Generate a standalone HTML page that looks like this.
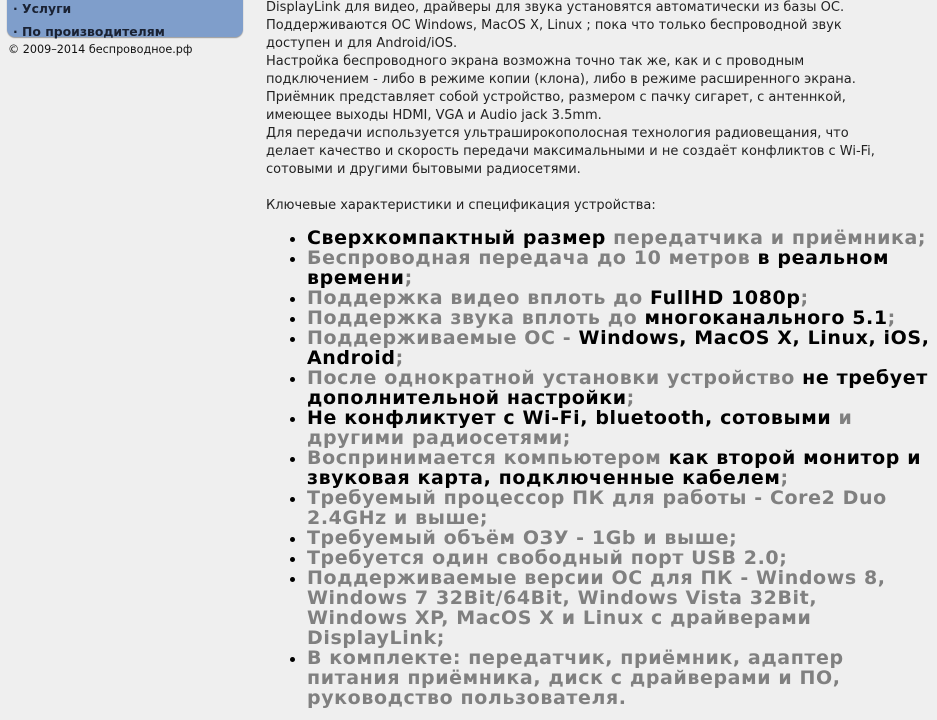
<!DOCTYPE html>
<html><head><meta charset="utf-8"><style>
html,body{margin:0;padding:0;background:#efefef;width:937px;height:720px;overflow:hidden;font-family:"DejaVu Sans","Liberation Sans",sans-serif;}
.side{position:absolute;left:7px;top:-10px;width:236px;height:47px;background:#7f9ecb;border-radius:0 0 8px 8px;box-shadow:0 1px 1px #999;}
.side div{position:absolute;left:6px;font-weight:bold;font-size:12.4px;color:#1a2233;white-space:nowrap}
.copy{position:absolute;left:8px;top:43px;font-size:11.2px;color:#111;white-space:nowrap}
.txt{position:absolute;left:266px;top:-1px;font-size:13px;line-height:18px;color:#222;white-space:nowrap}
ul{position:absolute;left:266px;top:228px;margin:0;padding:0 0 0 41px;font-weight:bold;font-size:19px;letter-spacing:0.6px;line-height:20px;color:#808080;white-space:nowrap;}
li{margin:0;}
li::marker{color:#000;font-size:18px}
b{color:#000}
</style></head><body>
<div class="side"><div style="top:11px">· Услуги</div><div style="top:34px">· По производителям</div></div>
<div class="copy">© 2009–2014 беспроводное.рф</div>
<div class="txt">DisplayLink для видео, драйверы для звука установятся автоматически из базы ОС.<br>Поддерживаются ОС Windows, MacOS X, Linux ; пока что только беспроводной звук<br>доступен и для Android/iOS.<br>Настройка беспроводного экрана возможна точно так же, как и с проводным<br>подключением - либо в режиме копии (клона), либо в режиме расширенного экрана.<br>Приёмник представляет собой устройство, размером с пачку сигарет, с антеннкой,<br>имеющее выходы HDMI, VGA и Audio jack 3.5mm.<br>Для передачи используется ультраширокополосная технология радиовещания, что<br>делает качество и скорость передачи максимальными и не создаёт конфликтов с Wi-Fi,<br>сотовыми и другими бытовыми радиосетями.<br><br>Ключевые характеристики и спецификация устройства:</div>
<ul>
<li><b>Сверхкомпактный размер</b> передатчика и приёмника;</li>
<li>Беспроводная передача до 10 метров <b>в реальном<br>времени</b>;</li>
<li>Поддержка видео вплоть до <b>FullHD 1080p</b>;</li>
<li>Поддержка звука вплоть до <b>многоканального 5.1</b>;</li>
<li>Поддерживаемые ОС - <b>Windows, MacOS X, Linux, iOS,<br>Android</b>;</li>
<li>После однократной установки устройство <b>не требует<br>дополнительной настройки</b>;</li>
<li><b>Не конфликтует с Wi-Fi, bluetooth, сотовыми</b> и<br>другими радиосетями;</li>
<li>Воспринимается компьютером <b>как второй монитор и<br>звуковая карта, подключенные кабелем</b>;</li>
<li>Требуемый процессор ПК для работы - Core2 Duo<br>2.4GHz и выше;</li>
<li>Требуемый объём ОЗУ - 1Gb и выше;</li>
<li>Требуется один свободный порт USB 2.0;</li>
<li>Поддерживаемые версии ОС для ПК - Windows 8,<br>Windows 7 32Bit/64Bit, Windows Vista 32Bit,<br>Windows XP, MacOS X и Linux с драйверами<br>DisplayLink;</li>
<li>В комплекте: передатчик, приёмник, адаптер<br>питания приёмника, диск с драйверами и ПО,<br>руководство пользователя.</li>
</ul>
</body></html>
